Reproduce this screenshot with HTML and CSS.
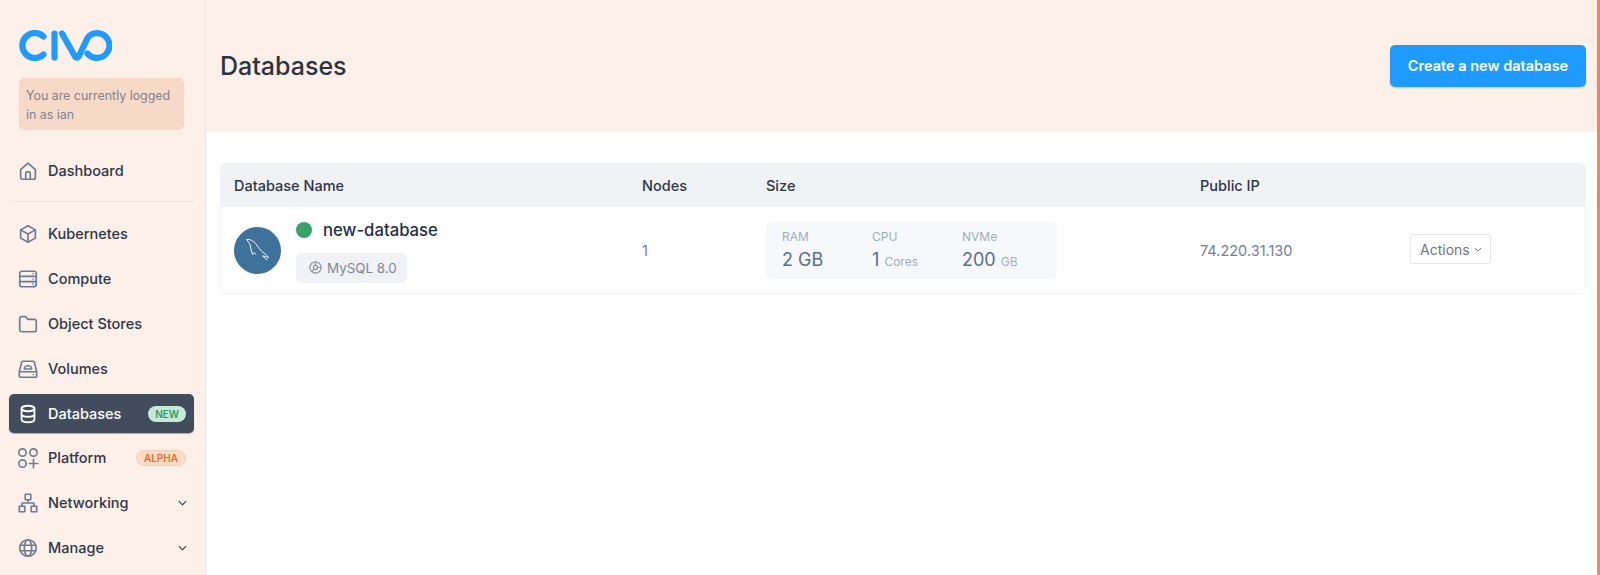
FILE: index.html
```html
<!DOCTYPE html>
<html lang="en">
<head>
    <meta charset="UTF-8">
    <title>Databases</title>
    <link rel="stylesheet" href="styles.css">
</head>
<body>
    <aside class="sidebar">
        <svg class="logo" viewBox="0 0 93 31" fill="none" stroke="#1f9bff" stroke-width="6.200" stroke-linecap="round" stroke-linejoin="round">
            <path d="M24.500 6.500A12.500 12.500 0 1 0 24.500 24.500"/>
            <path d="M35.500 3.500V27.500"/>
            <path d="M43 3.500L56 26.500Q58 29 60 26L68 9C70 5 73 3.100 78 3.100A12.400 12.400 0 1 1 68.500 23.500"/>
        </svg>
        <div class="login-note">You are currently logged in as ian</div>
        <nav class="nav">
            <a class="nav-item">
                <svg class="nav-icon" viewBox="0 0 24 24"><path d="M4 10.500L12 3.500L20 10.500V19a2 2 0 0 1-2 2H6a2 2 0 0 1-2-2Z"/><path d="M9.500 21V14.500a1.500 1.500 0 0 1 1.500-1.500h2a1.500 1.500 0 0 1 1.500 1.500V21"/></svg>
                <span>Dashboard</span>
            </a>
            <div class="nav-divider"></div>
            <a class="nav-item">
                <svg class="nav-icon" viewBox="0 0 24 24"><path d="M12 3L20 7.500V16.500L12 21L4 16.500V7.500Z"/><path d="M4 7.500L12 12L20 7.500M12 12V21"/></svg>
                <span>Kubernetes</span>
            </a>
            <a class="nav-item">
                <svg class="nav-icon" viewBox="0 0 24 24"><rect x="3" y="3.500" width="18" height="17" rx="2.500"/><path d="M3 9.200H21M3 14.800H21M17.500 6.400h.01M17.500 12h.01M17.500 17.600h.01"/></svg>
                <span>Compute</span>
            </a>
            <a class="nav-item">
                <svg class="nav-icon" viewBox="0 0 24 24"><path d="M3 6a2 2 0 0 1 2-2h4.500l2.500 3h7a2 2 0 0 1 2 2v9.500a2 2 0 0 1-2 2H5a2 2 0 0 1-2-2Z"/></svg>
                <span>Object Stores</span>
            </a>
            <a class="nav-item">
                <svg class="nav-icon" viewBox="0 0 24 24"><path d="M2.500 15L5 4.500a1.500 1.500 0 0 1 1.500-1h11a1.500 1.500 0 0 1 1.500 1L21.500 15"/><rect x="2.500" y="15" width="19" height="6" rx="1.500"/><path d="M8 12a4 3.500 0 0 1 8 0ZM17.500 18h.01"/></svg>
                <span>Volumes</span>
            </a>
            <a class="nav-item active">
                <svg class="nav-icon" viewBox="0 0 24 24"><ellipse cx="12" cy="6" rx="7" ry="3"/><path d="M5 6V18c0 1.700 3.100 3 7 3s7-1.300 7-3V6M5 12c0 1.700 3.100 3 7 3s7-1.300 7-3"/></svg>
                <span>Databases</span>
                <span class="badge badge-new">NEW</span>
            </a>
            <a class="nav-item">
                <svg class="nav-icon" viewBox="0 0 24 24"><circle cx="6" cy="6" r="4"/><circle cx="18" cy="6" r="4"/><circle cx="6" cy="18" r="4"/><path d="M18 13.500V22.500M13.500 18H22.500"/></svg>
                <span>Platform</span>
                <span class="badge badge-alpha">ALPHA</span>
            </a>
            <a class="nav-item">
                <svg class="nav-icon" viewBox="0 0 24 24"><rect x="9" y="2.500" width="6" height="6"/><rect x="2.500" y="15.500" width="6" height="6"/><rect x="15.500" y="15.500" width="6" height="6"/><path d="M12 8.500V12M5.500 15.500V12H18.500V15.500"/></svg>
                <span>Networking</span>
                <svg class="chevron" viewBox="0 0 10 6"><path d="M1 1L5 5L9 1"/></svg>
            </a>
            <a class="nav-item">
                <svg class="nav-icon" viewBox="0 0 24 24"><circle cx="12" cy="12" r="9"/><ellipse cx="12" cy="12" rx="4" ry="9"/><path d="M3.500 9H20.500M3.500 15H20.500"/></svg>
                <span>Manage</span>
                <svg class="chevron" viewBox="0 0 10 6"><path d="M1 1L5 5L9 1"/></svg>
            </a>
        </nav>
    </aside>

    <main class="content">
        <header class="page-header">
            <h1>Databases</h1>
            <button class="btn-create">Create a new database</button>
        </header>

        <section class="db-table">
            <div class="db-row db-head">
                <div>Database Name</div>
                <div>Nodes</div>
                <div>Size</div>
                <div>Public IP</div>
                <div></div>
            </div>
            <div class="db-row db-body">
                <div class="db-name-cell">
                    <div class="db-avatar">
                        <svg viewBox="0 0 24 24" fill="none" stroke="#fff" stroke-width="0.800" stroke-linecap="round" stroke-linejoin="round"><path d="M2.500 3C5 2.500 8 4 10 6.500C12 9 13 11 15 13C16.500 14.500 19 15.500 21 18.500C19 17.500 17.500 17.500 16 17C17 18.500 18.500 19.500 20 20.500"/><path d="M2.500 3C3 5 5 6 5.500 8.500C6 11 6 13 7.500 16C8 14 9 13.500 10 15.500"/></svg>
                    </div>
                    <div class="db-info">
                        <div class="db-title"><span class="status-dot"></span>new-database</div>
                        <div class="db-engine">
                            <svg viewBox="0 0 16 16" fill="none" stroke="#8f96a3" stroke-width="1.300"><circle cx="8" cy="8" r="6"/><circle cx="8" cy="8" r="2.200"/><path d="M8 2V5.800M14 8H10.200M4 12.500L6.400 9.500"/></svg>
                            MySQL 8.0
                        </div>
                    </div>
                </div>
                <div class="db-muted">1</div>
                <div>
                    <div class="size-box">
                        <div class="size-col"><span class="size-label">RAM</span><span class="size-value">2 GB</span></div>
                        <div class="size-col"><span class="size-label">CPU</span><span class="size-value">1 <small>Cores</small></span></div>
                        <div class="size-col"><span class="size-label">NVMe</span><span class="size-value">200 <small>GB</small></span></div>
                    </div>
                </div>
                <div class="db-muted">74.220.31.130</div>
                <div>
                    <button class="btn-actions">Actions
                        <svg viewBox="0 0 10 6"><path d="M1 1L5 5L9 1"/></svg>
                    </button>
                </div>
            </div>
        </section>
    </main>
</body>
</html>
```

FILE: styles.css
```css
* {
    box-sizing: border-box;
}

html, body {
    height: 100%;
}

body {
    margin: 0;
    display: flex;
    overflow: hidden;
    font-family: Inter, "Liberation Sans", sans-serif;
    background-color: #fff;
    color: #252f3f;
    border-right: 3px solid #f0875a;
}

.sidebar {
    width: 206px;
    flex-shrink: 0;
    padding: 30px 0 0 9px;
    background-color: #fdf0e9;
    border-right: 1px solid #f8e0d4;
}

.logo {
    display: block;
    width: 93px;
    height: 31px;
    margin-left: 10px;
}

.login-note {
    width: 165px;
    height: 52px;
    margin: 17px 0 0 10px;
    padding: 8px 7px;
    font-size: 12.400px;
    line-height: 19px;
    color: #7d8492;
    background-color: #f7d9c8;
    border-radius: 5px;
}

.nav {
    width: 185px;
    margin-top: 18px;
}

.nav-item {
    display: flex;
    align-items: center;
    height: 45px;
    padding: 0 11px 0 8px;
    font-size: 14.500px;
    font-weight: 500;
    color: #2d3748;
}

.nav-divider {
    height: 1px;
    margin: 8px 0 9px;
    background-color: #f4e2da;
}

.nav-item.active {
    height: 39px;
    margin: 3px 0 2px;
    color: #fff;
    background-color: #424c5c;
    border-radius: 5px;
    box-shadow: 0 1px 1px rgba(0, 0, 0, 0.3);
}

.nav-icon {
    width: 22px;
    height: 22px;
    margin-right: 9px;
    flex-shrink: 0;
    fill: none;
    stroke: #6b7d96;
    stroke-width: 1.800;
    stroke-linecap: round;
    stroke-linejoin: round;
}

.active .nav-icon {
    stroke: #fff;
    stroke-width: 2;
}

.badge {
    margin-left: auto;
    height: 16px;
    padding: 0 7px;
    font-size: 10px;
    font-weight: 600;
    line-height: 16px;
    border-radius: 8px;
}

.badge-new {
    margin-right: -3px;
    color: #2f9e63;
    background-color: #c6e8d5;
}

.badge-alpha {
    margin-right: -3px;
    color: #e56f24;
    background-color: #fbdcc8;
    border: 1px solid #f8cfb6;
    line-height: 14px;
}

.chevron {
    margin: 0 -4px 0 auto;
    width: 9px;
    height: 6px;
    fill: none;
    stroke: #252f3f;
    stroke-width: 1.200;
}

.content {
    flex: 1;
    min-width: 0;
}

.page-header {
    display: flex;
    align-items: center;
    justify-content: space-between;
    height: 132px;
    padding: 0 11px 0 14px;
    background-color: #fdf0e9;
}

.page-header h1 {
    margin: 0;
    font-size: 25px;
    font-weight: 500;
    color: #2a3344;
}

.btn-create {
    width: 196px;
    height: 42px;
    margin-bottom: 1px;
    font-family: inherit;
    font-size: 14.500px;
    font-weight: 600;
    color: #fff;
    background-color: #1f9bff;
    border: none;
    border-radius: 5px;
    box-shadow: 0 1px 2px rgba(0, 0, 0, 0.15);
}

.db-table {
    margin: 31px 11px 0 14px;
    border: 1px solid #f1f2f5;
    border-top: none;
    border-radius: 5px;
}

.db-row {
    display: grid;
    grid-template-columns: 408px 124px 434px 210px 1fr;
    align-items: center;
}

.db-row > div {
    padding-left: 13px;
}

.db-head {
    height: 44px;
    font-size: 14.500px;
    font-weight: 500;
    color: #2d3748;
    background-color: #f0f2f6;
    border-radius: 5px 5px 0 0;
}

.db-body {
    height: 86px;
}

.db-name-cell {
    display: flex;
    align-items: center;
}

.db-avatar {
    display: flex;
    align-items: center;
    justify-content: center;
    width: 47px;
    height: 47px;
    background-color: #3f729b;
    border-radius: 50%;
}

.db-avatar svg {
    width: 28px;
    height: 28px;
}

.db-info {
    margin: 2px 0 0 15px;
}

.db-title {
    display: flex;
    align-items: center;
    gap: 11px;
    font-size: 16.700px;
    font-weight: 500;
    color: #252f3f;
}

.status-dot {
    width: 16px;
    height: 16px;
    background-color: #38a169;
    border-radius: 50%;
}

.db-engine {
    display: flex;
    align-items: center;
    gap: 4px;
    width: 111px;
    height: 30px;
    margin-top: 13px;
    padding-left: 12px;
    font-size: 13.400px;
    color: #7f8794;
    background-color: #f0f2f6;
    border-radius: 5px;
}

.db-engine svg {
    width: 15px;
    height: 15px;
}

.db-muted {
    font-size: 14.500px;
    color: #718096;
}

.size-box {
    display: grid;
    grid-template-columns: 90px 90px 1fr;
    width: 291px;
    height: 57px;
    padding: 7px 0 0 16px;
    background-color: #f7f8fb;
    border-radius: 5px;
}

.size-col {
    display: flex;
    flex-direction: column;
}

.size-label {
    font-size: 12px;
    line-height: 15px;
    color: #a0aec0;
}

.size-value {
    margin-top: 4px;
    font-size: 18px;
    line-height: 24px;
    color: #5a6f8c;
}

.size-value small {
    font-size: 12px;
    color: #a0aec0;
}

.btn-actions {
    display: flex;
    align-items: center;
    gap: 4px;
    height: 30px;
    padding: 0 8px 0 9px;
    margin-top: -2px;
    font-family: inherit;
    font-size: 14px;
    color: #6f7785;
    background-color: #fff;
    border: 1px solid #e2e6ee;
    border-radius: 3px;
}

.btn-actions svg {
    width: 8px;
    height: 5px;
    fill: none;
    stroke: #6f7785;
    stroke-width: 1.200;
}
```
